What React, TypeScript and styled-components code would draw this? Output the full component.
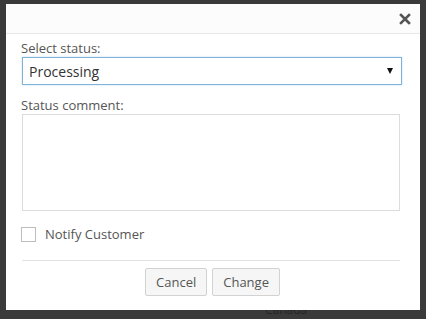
import React from "react";
import styled, { createGlobalStyle } from "styled-components";

const Global = createGlobalStyle`
  html, body { margin: 0; padding: 0; }
  body {
    background: #3a3a3a;
    font-family: "Open Sans", "Liberation Sans", sans-serif;
    width: 426px;
    height: 319px;
    overflow: hidden;
  }
`;

const Backdrop = styled.div`
  position: relative;
  width: 426px;
  height: 319px;
  padding: 4px 6px 0 6px;
  box-sizing: border-box;
`;

const BehindText = styled.span`
  position: absolute;
  left: 265px;
  top: 302px;
  font-size: 12px;
  line-height: 16px;
  color: #262626;
`;

const Modal = styled.div`
  position: relative;
  z-index: 1;
  width: 414px;
  height: 306px;
  background: #fff;
  display: flex;
  flex-direction: column;
  box-sizing: border-box;
`;

const Header = styled.div`
  height: 30px;
  border-bottom: 1px solid #e8e8e8;
  background: #fcfcfc;
  display: flex;
  justify-content: flex-end;
  align-items: center;
  padding-right: 8px;
  box-sizing: border-box;
`;

const Close = styled.button`
  border: none;
  background: none;
  padding: 0;
  width: 14px;
  height: 14px;
  display: flex;
  align-items: center;
  justify-content: center;
  cursor: pointer;
`;

const Body = styled.div`
  padding: 6px 18px 0 15px;
  display: flex;
  flex-direction: column;
`;

const Label = styled.label`
  font-size: 13px;
  line-height: 17px;
  color: #555;
  display: block;
`;

const SelectBox = styled.div`
  margin-left: 1px;
  height: 28px;
  border: 1px solid #7fb4d8;
  box-shadow: 0 0 2px rgba(102, 175, 233, 0.4);
  display: flex;
  align-items: center;
  justify-content: space-between;
  padding: 0 8px 0 6px;
  box-sizing: border-box;
  font-size: 14px;
  color: #333;
`;

const Arrow = styled.span`
  width: 0;
  height: 0;
  border-left: 3.5px solid transparent;
  border-right: 3.5px solid transparent;
  border-top: 6px solid #111;
`;

const Field = styled.div<{ $gap?: number }>`
  display: flex;
  flex-direction: column;
  margin-top: ${(p) => p.$gap ?? 0}px;
`;

const TextArea = styled.div`
  margin-left: 1px;
  margin-right: 2px;
  height: 97px;
  border: 1px solid #dcdcdc;
  box-sizing: border-box;
`;

const CheckRow = styled.label`
  display: flex;
  align-items: center;
  gap: 9px;
  margin-top: 14px;
  font-size: 13px;
  color: #555;
`;

const Box = styled.span`
  width: 15px;
  height: 15px;
  border: 1px solid #bdbdbd;
  box-sizing: border-box;
  background: #fff;
`;

const Rule = styled.hr`
  border: none;
  border-top: 1px solid #e2e2e2;
  margin: 17px 2px 0 1px;
`;

const Footer = styled.div`
  display: flex;
  justify-content: center;
  gap: 5px;
  margin-top: 7px;
  padding-left: 2px;
`;

const Button = styled.button`
  height: 28px;
  padding: 0 10px;
  border: 1px solid #d2d2d2;
  border-radius: 2px;
  background: #f6f6f6;
  color: #555;
  font-family: "Open Sans", "Liberation Sans", sans-serif;
  font-size: 13px;
  box-sizing: border-box;
`;

export default function App() {
  return (
    <>
      <Global />
      <Backdrop>
        <Modal>
          <Header>
            <Close aria-label="close">
              <svg width="12" height="12" viewBox="0 0 12 12">
                <path d="M2 2 L10 10 M10 2 L2 10" stroke="#555" strokeWidth="2.6" strokeLinecap="square" />
              </svg>
            </Close>
          </Header>
          <Body>
            <Field $gap={0}>
              <Label>Select status:</Label>
              <SelectBox>
                <span>Processing</span>
                <Arrow />
              </SelectBox>
            </Field>
            <Field $gap={12}>
              <Label>Status comment:</Label>
              <TextArea />
            </Field>
            <CheckRow>
              <Box />
              Notify Customer
            </CheckRow>
            <Rule />
            <Footer>
              <Button>Cancel</Button>
              <Button>Change</Button>
            </Footer>
          </Body>
        </Modal>
        <BehindText>Canada</BehindText>
      </Backdrop>
    </>
  );
}
